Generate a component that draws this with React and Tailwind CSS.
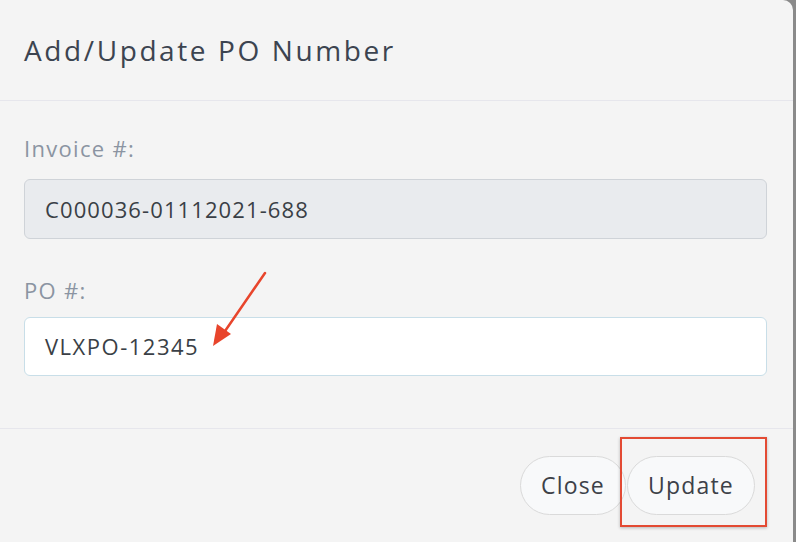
import React from 'react';

const Arrow = () => (
  <svg className="absolute left-[205px] top-[268px] pointer-events-none" width="66" height="84" viewBox="0 0 66 84">
    <line x1="60" y1="5" x2="18" y2="66" stroke="#e8452c" strokeWidth="2.5" strokeLinecap="round" />
    <polygon points="8,78 12,56 26,66" fill="#e8452c" />
  </svg>
);

const App = () => {
  return (
    <div className="relative w-[796px] h-[542px] bg-[#8a8a8a] overflow-hidden" style={{ fontFamily: '"Open Sans", Lato, sans-serif' }}>
      <div className="relative w-[793px] h-[542px] bg-[#f4f4f4] rounded-tr-[10px] flex flex-col">
        <div className="h-[101px] border-b border-[#e6e6ec] flex items-center px-6">
          <h2 className="text-[28px] text-[#3c4450] tracking-[2.6px] font-normal">Add/Update PO Number</h2>
        </div>

        <div className="h-[328px] border-b border-[#e6e6ec] px-6 pt-[33px]">
          <label className="block text-[22px] leading-[28px] text-[#8b94a2] tracking-[1.3px]">Invoice #:</label>
          <div className="mt-[17px] w-[743px] h-[60px] bg-[#e9ebee] border border-[#cfd3d8] rounded-[6px] flex items-center px-5 text-[22px] text-[#3a3f46] tracking-[1.1px]">
            C000036-01112021-688
          </div>
          <label className="block mt-[37px] text-[22px] leading-[28px] text-[#8b94a2] tracking-[1.3px]">PO #:</label>
          <div className="mt-[13px] w-[743px] h-[59px] bg-white border border-[#c8dee8] rounded-[6px] flex items-center px-5 text-[22px] text-[#3a3f46] tracking-[1.5px]">
            VLXPO-12345
          </div>
        </div>

        <div className="flex justify-end items-start pt-[27px] pr-[38px] gap-[1px]">
          <button className="w-[106px] h-[59px] rounded-full bg-[#f8f9fa] border border-[#dadada] text-[23px] text-[#3d4148] tracking-[1.2px]">Close</button>
          <button className="w-[128px] h-[59px] rounded-full bg-[#f8f9fa] border border-[#dadada] text-[23px] text-[#3d4148] tracking-[1.2px]">Update</button>
        </div>
      </div>

      <Arrow />
      <div className="absolute left-[620px] top-[437px] w-[147px] h-[90px] border-2 border-[#e34a33] shadow-[0_1px_3px_rgba(0,0,0,0.25)] pointer-events-none" />
    </div>
  );
};

export default App;
